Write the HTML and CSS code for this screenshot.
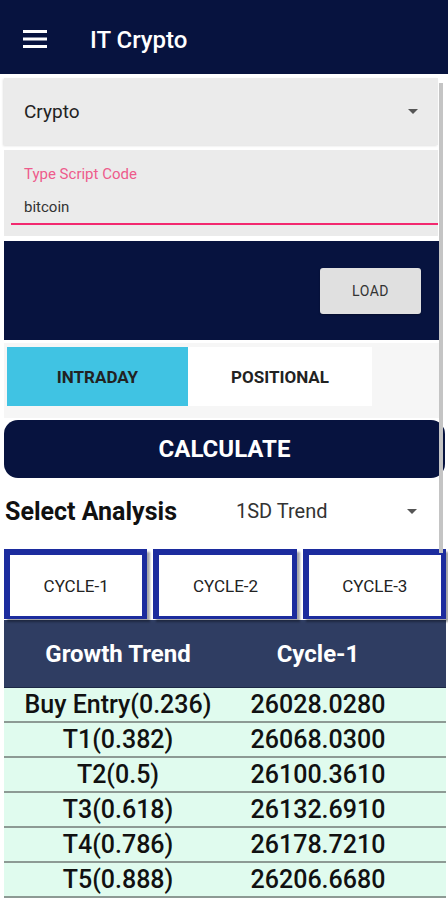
FILE: index.html
```html
<!DOCTYPE html>
<html lang="en">

<head>
    <meta charset="UTF-8">
    <meta name="viewport" content="width=device-width, initial-scale=1.0">
    <title>IT Crypto</title>
    <link rel="stylesheet" href="styles.css">
</head>

<body>
    <header class="appbar">
        <button class="menu-btn" aria-label="Menu">
            <svg width="24" height="20" viewBox="0 0 24 20">
                <rect x="0" y="1" width="24" height="3" fill="#fff" />
                <rect x="0" y="8.5" width="24" height="3" fill="#fff" />
                <rect x="0" y="16" width="24" height="3" fill="#fff" />
            </svg>
        </button>
        <h1 class="title">IT Crypto</h1>
    </header>

    <main class="page">
        <div class="scrollbar"></div>

        <div class="select-box">
            <span>Crypto</span>
            <span class="caret"></span>
        </div>

        <div class="field">
            <div class="field-inner">
                <label class="field-label">Type Script Code</label>
                <div class="field-value">bitcoin</div>
            </div>
        </div>

        <div class="load-panel">
            <button class="load-btn">LOAD</button>
        </div>

        <div class="tabs">
            <button class="tab active">INTRADAY</button>
            <button class="tab">POSITIONAL</button>
        </div>

        <button class="calc-btn">CALCULATE</button>

        <div class="analysis-row">
            <span class="analysis-label">Select Analysis</span>
            <span class="analysis-value">1SD Trend</span>
            <span class="caret"></span>
        </div>

        <div class="cycles">
            <button class="cycle">CYCLE-1</button>
            <button class="cycle">CYCLE-2</button>
            <button class="cycle">CYCLE-3</button>
        </div>

        <div class="result-table">
            <div class="row head">
                <span>Growth Trend</span>
                <span>Cycle-1</span>
            </div>
            <div class="row">
                <span>Buy Entry(0.236)</span>
                <span>26028.0280</span>
            </div>
            <div class="row">
                <span>T1(0.382)</span>
                <span>26068.0300</span>
            </div>
            <div class="row">
                <span>T2(0.5)</span>
                <span>26100.3610</span>
            </div>
            <div class="row">
                <span>T3(0.618)</span>
                <span>26132.6910</span>
            </div>
            <div class="row">
                <span>T4(0.786)</span>
                <span>26178.7210</span>
            </div>
            <div class="row">
                <span>T5(0.888)</span>
                <span>26206.6680</span>
            </div>
        </div>
    </main>
</body>

</html>
```

FILE: styles.css
```css
body {
    font-family: Roboto, "Noto Sans", sans-serif;
    background-color: #ffffff;
    margin: 0;
    padding: 0;
    color: #222;
}

button {
    font-family: inherit;
    border: none;
    padding: 0;
    cursor: pointer;
}

.appbar {
    background-color: #07133f;
    height: 74px;
    box-sizing: border-box;
    display: flex;
    align-items: center;
    padding: 8px 0 0 23px;
}

.menu-btn {
    background: none;
    display: flex;
    margin-top: -4px;
}

.title {
    color: #fff;
    font-size: 24px;
    font-weight: 500;
    margin: -2px 0 0 43px;
}

.page {
    position: relative;
    padding: 0 4px;
}

/* scroll thumb drawn over the form */
.scrollbar {
    position: absolute;
    top: 5px;
    left: 439px;
    width: 4px;
    height: 470px;
    background-color: #c4c4c4;
}

.select-box {
    margin: 4px 6px 0 0;
    height: 67px;
    background-color: #ebebeb;
    display: flex;
    align-items: center;
    justify-content: space-between;
    padding: 0 20px 0 20px;
    font-size: 19px;
    color: #222;
    box-shadow: -1px 1px 2px rgba(0, 0, 0, 0.12);
}

.caret {
    width: 0;
    height: 0;
    border-left: 5px solid transparent;
    border-right: 5px solid transparent;
    border-top: 5px solid #555;
}

.field {
    margin: 5px 6px 0 0;
    background-color: #ebebeb;
    padding: 16px 0 11px 7px;
}

.field-inner {
    border-bottom: 2px solid #f2296f;
    padding: 0 0 6px 13px;
}

.field-label {
    display: block;
    color: #ee5b8c;
    font-size: 15px;
    line-height: 16px;
}

.field-value {
    margin-top: 15px;
    font-size: 15px;
    line-height: 20px;
    color: #333;
}

.load-panel {
    margin: 5px 3px 0 0;
    height: 99px;
    box-sizing: border-box;
    background-color: #07133f;
    display: flex;
    justify-content: flex-end;
    align-items: flex-start;
    padding: 27px 20px 0 0;
}

.load-btn {
    width: 101px;
    height: 46px;
    background-color: #e0e0e0;
    border-radius: 3px;
    font-size: 14px;
    letter-spacing: 0.5px;
    color: #333;
    box-shadow: 0 1px 2px rgba(0, 0, 0, 0.3);
}

.tabs {
    margin: 3px 4px 0 0;
    padding: 4px 0 12px 3px;
    background-color: #f6f6f6;
    display: flex;
}

.tab {
    width: 184px;
    height: 59px;
    background-color: #fff;
    font-size: 17px;
    font-weight: 700;
    color: #222;
}

.tab.active {
    width: 181px;
    background-color: #40c3e3;
}

.calc-btn {
    display: block;
    margin: 2px -1px 0 0;
    width: calc(100% + 1px);
    height: 58px;
    background-color: #07133f;
    border-radius: 14px;
    color: #fff;
    font-size: 24px;
    font-weight: 700;
}

.analysis-row {
    height: 66px;
    display: flex;
    align-items: center;
    padding: 0 27px 0 1px;
}

.analysis-label {
    font-size: 25px;
    font-weight: 700;
    color: #111;
    width: 231px;
}

.analysis-value {
    flex: 1;
    font-size: 20px;
    color: #333;
}

.cycles {
    margin: 5px -2px 0 0;
    display: flex;
    gap: 6px;
}

.cycle {
    flex: 1;
    height: 70px;
    background-color: #fff;
    border: 6px solid #1c2c9e;
    border-bottom-width: 3px;
    border-right-width: 5px;
    font-size: 17px;
    color: #222;
    box-shadow: 3px 3px 2px rgba(0, 0, 0, 0.35);
}

.result-table {
    margin: 1px -2px 0 0;
}

.row {
    display: grid;
    grid-template-columns: 228px 172px;
    height: 33px;
    align-items: center;
    background-color: #e0fbee;
    border-bottom: 2px solid #8d9a94;
    font-size: 25px;
    font-weight: 500;
    color: #111;
    text-align: center;
}

.row.head {
    height: 67px;
    background-color: #2f3d62;
    border-bottom: 1px solid #1d2846;
    color: #fff;
    font-size: 24px;
    font-weight: 700;
}
```
